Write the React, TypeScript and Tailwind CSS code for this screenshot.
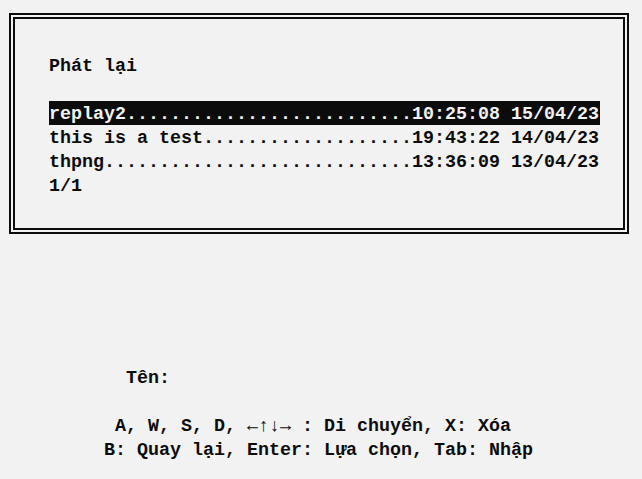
const replays = [
  { name: "replay2", time: "10:25:08 15/04/23" },
  { name: "this is a test", time: "19:43:22 14/04/23" },
  { name: "thpng", time: "13:36:09 13/04/23" },
];

// one terminal row: 50 cells, name padded with dots up to the timestamp
const row = (name: string, time: string) => name.padEnd(50 - time.length, ".") + time;

// every terminal line is a 24px cell; text sits a little low in it
const line = "whitespace-pre h-[24px] pt-[3px] leading-[21px]";

export default function App() {
  const selected = 0;

  return (
    <div
      className="w-[642px] h-[479px] bg-[#f2f2f2] text-[#0c0c0c] font-bold text-[18.33px] overflow-hidden"
      style={{ fontFamily: '"Liberation Mono", "DejaVu Sans Mono", monospace' }}
    >
      <div className="ml-[9px] mt-[13px] w-[620px] h-[221px] border-2 border-[#0c0c0c] p-[2px] flex">
        <div className="flex-1 border-2 border-[#0c0c0c] pl-[34px] pt-[34px]">
          <div className={line}>Phát lại</div>
          <div className="h-[24px]" />
          {replays.map((r, i) => (
            <div
              key={r.name}
              className={`${line} w-[551px] ${i === selected ? "bg-[#0c0c0c] text-[#f2f2f2]" : ""}`}
            >
              {row(r.name, r.time)}
            </div>
          ))}
          <div className={line}>1/1</div>
        </div>
      </div>

      <div className="mt-[131px]">
        <div className={`${line} pl-[126px]`}>Tên:</div>
        <div className="h-[24px]" />
        <div className={`${line} pl-[115px]`}>A, W, S, D, ←↑↓→ : Di chuyển, X: Xóa</div>
        <div className={`${line} pl-[104px]`}>B: Quay lại, Enter: Lựa chọn, Tab: Nhập</div>
      </div>
    </div>
  );
}
